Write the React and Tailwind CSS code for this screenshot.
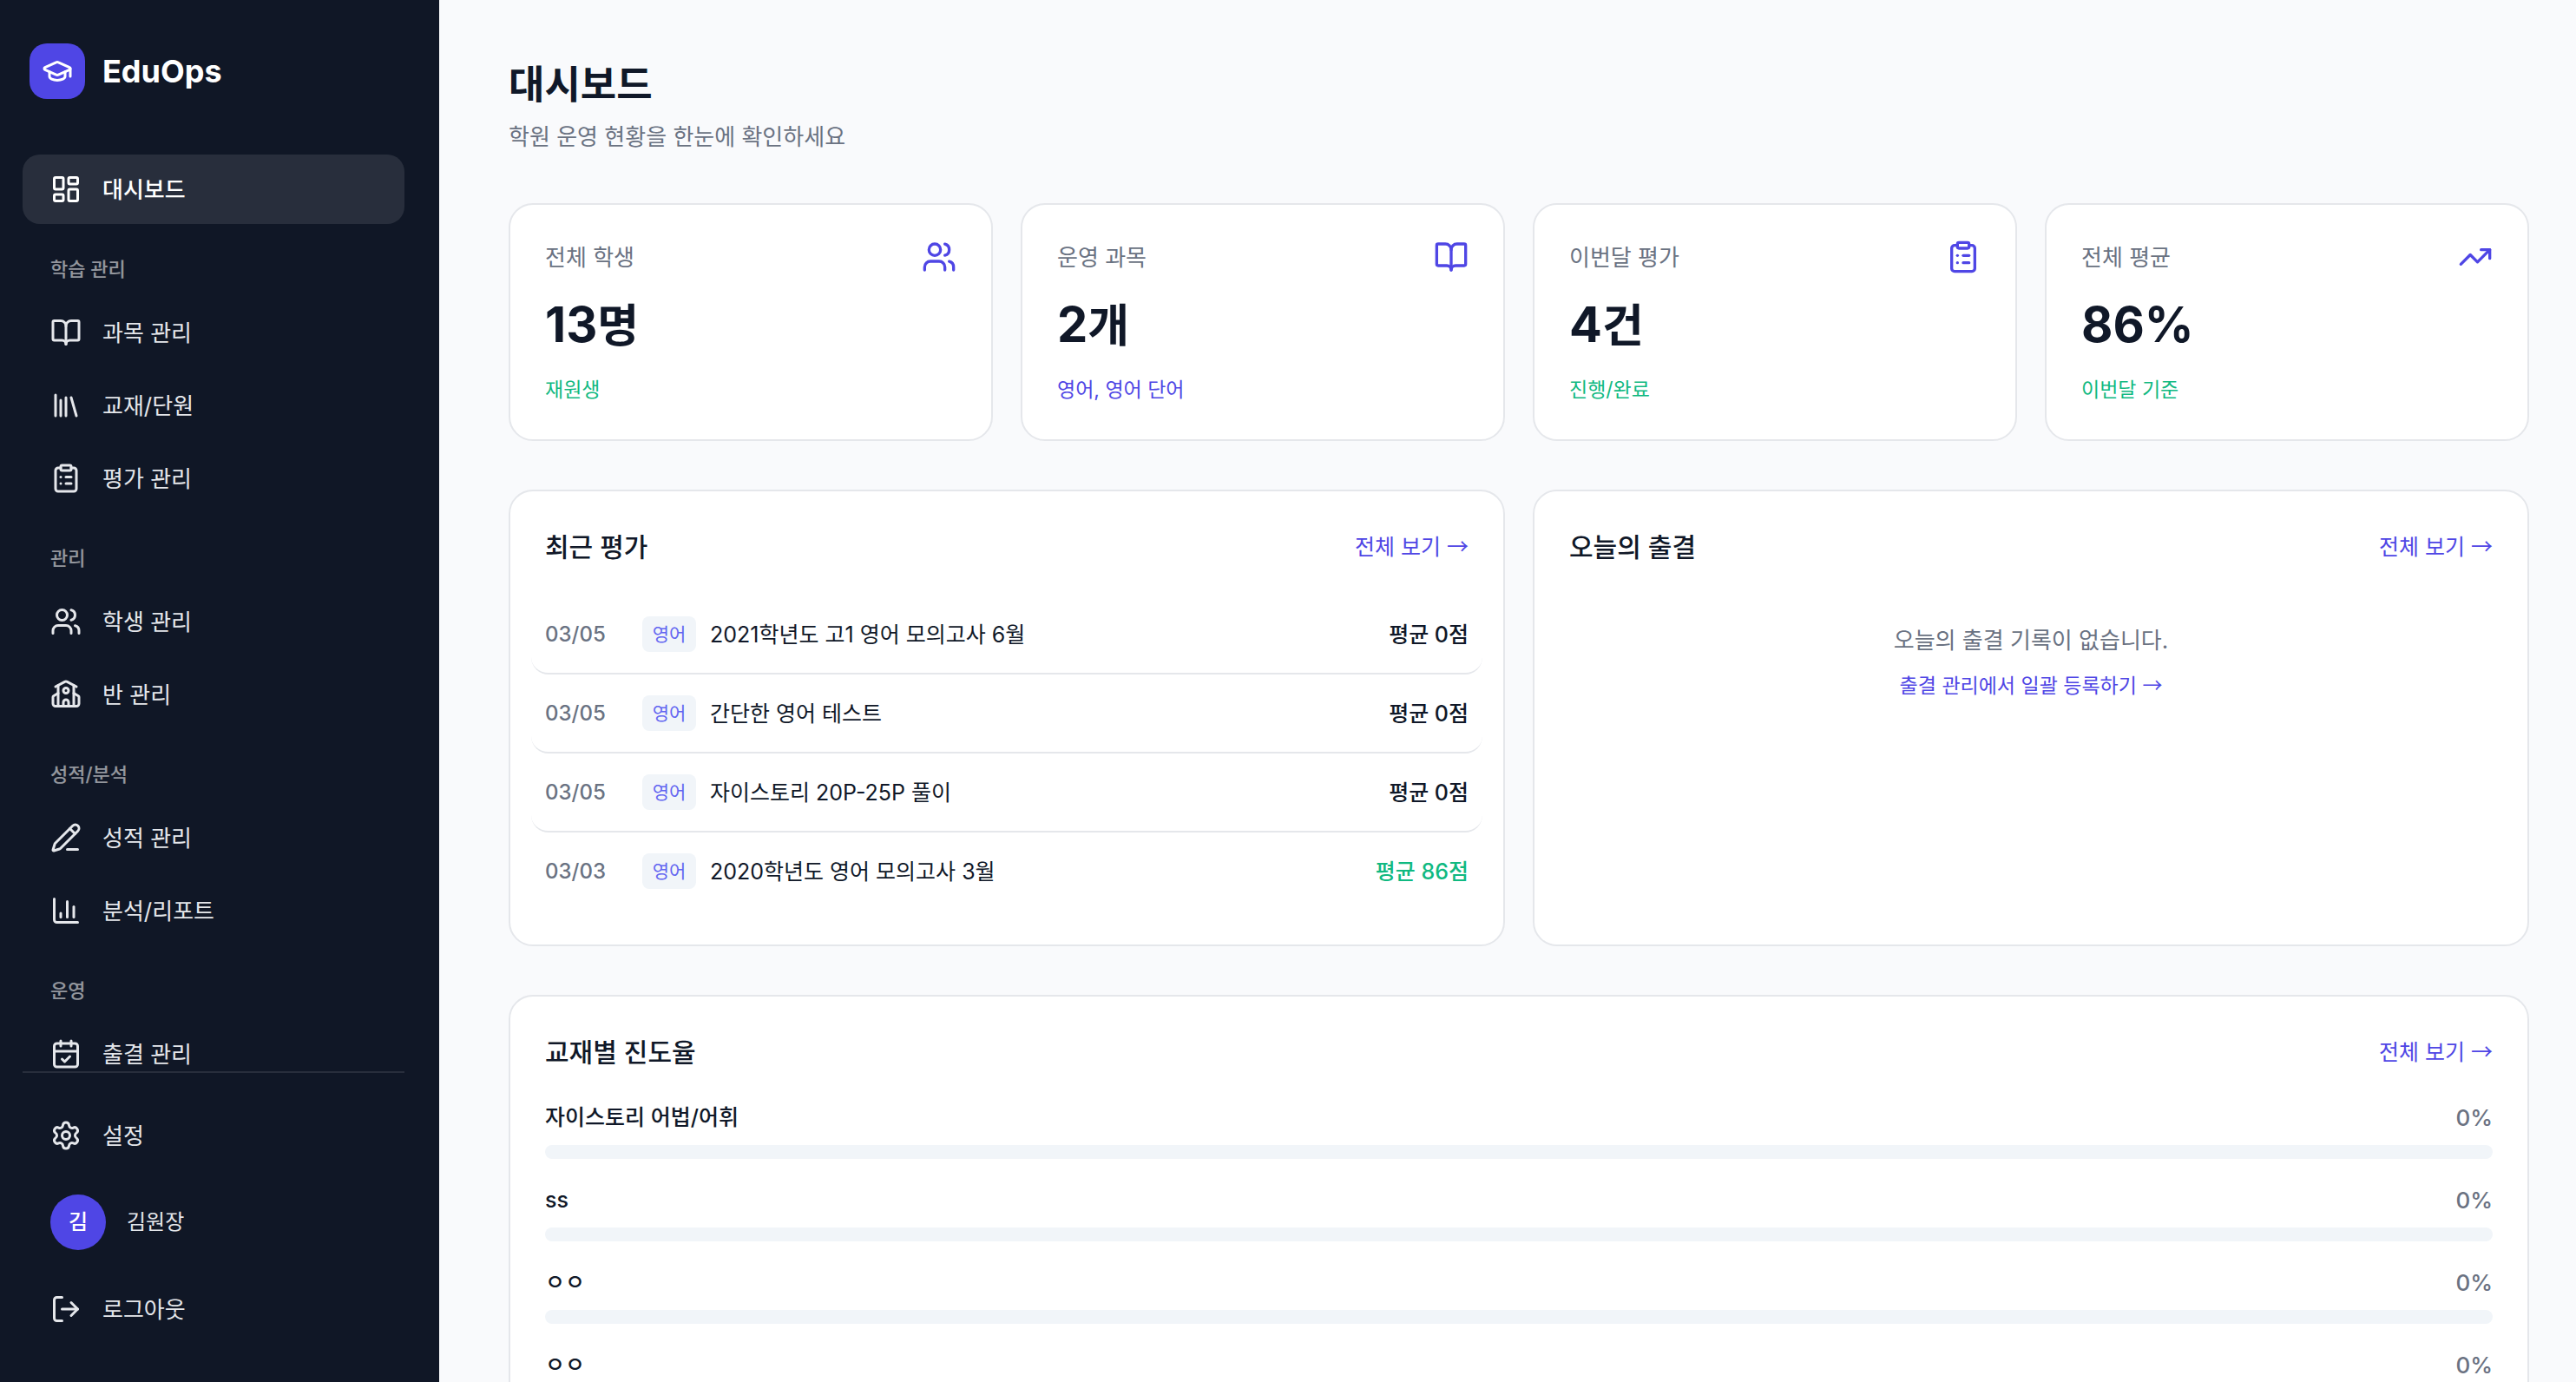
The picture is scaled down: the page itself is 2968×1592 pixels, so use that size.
import React from "react";
import {
  BookOpen,
  CalendarCheck,
  ChartColumn,
  ClipboardList,
  GraduationCap,
  LayoutDashboard,
  Library,
  LogOut,
  PencilLine,
  School,
  Settings,
  TrendingUp,
  Users,
} from "lucide-react";

const NAV_GROUPS = [
  {
    title: "학습 관리",
    items: [
      { label: "과목 관리", icon: BookOpen },
      { label: "교재/단원", icon: Library },
      { label: "평가 관리", icon: ClipboardList },
    ],
  },
  {
    title: "관리",
    items: [
      { label: "학생 관리", icon: Users },
      { label: "반 관리", icon: School },
    ],
  },
  {
    title: "성적/분석",
    items: [
      { label: "성적 관리", icon: PencilLine },
      { label: "분석/리포트", icon: ChartColumn },
    ],
  },
  {
    title: "운영",
    items: [{ label: "출결 관리", icon: CalendarCheck }],
  },
];

const STATS = [
  { label: "전체 학생", value: "13", unit: "명", note: "재원생", tone: "text-[#10b981]", icon: Users },
  { label: "운영 과목", value: "2", unit: "개", note: "영어, 영어 단어", tone: "text-[#4f46e5]", icon: BookOpen },
  { label: "이번달 평가", value: "4", unit: "건", note: "진행/완료", tone: "text-[#10b981]", icon: ClipboardList },
  { label: "전체 평균", value: "86%", unit: "", note: "이번달 기준", tone: "text-[#10b981]", icon: TrendingUp },
];

const EXAMS = [
  { date: "03/05", subject: "영어", title: "2021학년도 고1 영어 모의고사 6월", score: "평균 0점", tone: "text-gray-900" },
  { date: "03/05", subject: "영어", title: "간단한 영어 테스트", score: "평균 0점", tone: "text-gray-900" },
  { date: "03/05", subject: "영어", title: "자이스토리 20P-25P 풀이", score: "평균 0점", tone: "text-gray-900" },
  { date: "03/03", subject: "영어", title: "2020학년도 영어 모의고사 3월", score: "평균 86점", tone: "text-[#10b981]" },
];

const PROGRESS = [
  { name: "자이스토리 어법/어휘", percent: 0 },
  { name: "ss", percent: 0 },
  { name: "ㅇㅇ", percent: 0 },
  { name: "ㅇㅇ", percent: 0 },
];

function Arrow() {
  return <span className="font-['Noto_Sans_CJK_KR',sans-serif] font-normal">→</span>;
}

function NavItem({ label, icon: Icon, active = false }) {
  return (
    <a
      href="#"
      aria-current={active ? "page" : undefined}
      className={
        active
          ? "flex h-20 shrink-0 items-center gap-6 rounded-[20px] bg-white/10 px-8 text-[26px] font-medium text-white"
          : "flex h-20 shrink-0 items-center gap-6 rounded-[20px] px-8 text-[26px] text-gray-200"
      }
    >
      <Icon size={36} />
      <span>{label}</span>
    </a>
  );
}

function Sidebar() {
  return (
    <aside className="flex w-[506px] shrink-0 flex-col bg-[#101726] pt-[50px] pr-10 pb-11 pl-[26px]">
      <div className="flex items-center gap-5 px-2">
        <div className="flex size-16 items-center justify-center rounded-[20px] bg-[#4f46e5] text-white">
          <GraduationCap size={36} />
        </div>
        <span className="text-4xl font-bold text-white">EduOps</span>
      </div>

      <nav className="mt-16 flex min-h-0 flex-1 flex-col gap-1 overflow-hidden">
        <NavItem label="대시보드" icon={LayoutDashboard} active />
        {NAV_GROUPS.map((group) => (
          <React.Fragment key={group.title}>
            <h2 className="shrink-0 px-8 pt-8 pb-3 text-[22px] leading-[33px] font-medium text-white/55">
              {group.title}
            </h2>
            {group.items.map((item) => (
              <NavItem key={item.label} {...item} />
            ))}
          </React.Fragment>
        ))}
      </nav>

      <div className="flex flex-col gap-1 border-t-2 border-white/10 pt-8">
        <NavItem label="설정" icon={Settings} />
        <div className="flex items-center gap-6 px-8 py-6">
          <div className="flex size-16 items-center justify-center rounded-full bg-[#4f46e5] text-2xl font-medium text-white">
            김
          </div>
          <span className="text-2xl text-gray-200">김원장</span>
        </div>
        <button type="button" className="flex h-20 items-center gap-6 rounded-[20px] px-8 text-[26px] text-gray-200">
          <LogOut size={36} />
          <span>로그아웃</span>
        </button>
      </div>
    </aside>
  );
}

function StatCard({ label, value, unit, note, tone, icon: Icon }) {
  return (
    <section className="rounded-[28px] border-2 border-gray-200 bg-white p-10">
      <div className="flex h-10 items-center justify-between">
        <h2 className="text-[26px] text-gray-500">{label}</h2>
        <Icon size={40} className="text-[#4f46e5]" />
      </div>
      <p className="my-4 text-[56px] leading-[84px] font-bold text-gray-900">
        {value}
        {unit && <span className="text-[52px] leading-none">{unit}</span>}
      </p>
      <p className={`text-[23px] leading-[34px] ${tone}`}>{note}</p>
    </section>
  );
}

function Panel({ title, children }) {
  return (
    <section className="rounded-[28px] border-2 border-gray-200 bg-white p-10">
      <header className="mb-8 flex h-12 items-center justify-between">
        <h2 className="text-[30px] font-medium text-gray-900">{title}</h2>
        <a href="#" className="text-[25px] text-[#4f46e5]">
          전체 보기 <Arrow />
        </a>
      </header>
      {children}
    </section>
  );
}

function ExamRow({ date, subject, title, score, tone }) {
  return (
    <li className="-mx-4 flex items-center gap-4 rounded-[20px] border-b-2 border-gray-200 px-4 py-6 last:border-b-0">
      <span className="w-24 text-2xl font-medium text-gray-500">{date}</span>
      <span className="flex h-[41px] w-[62px] items-center justify-center rounded-lg bg-slate-100 text-[21px] text-[#6366f1]">
        {subject}
      </span>
      <span className="flex-1 text-[25px] leading-8 text-gray-900">{title}</span>
      <span className={`text-[25px] leading-8 font-medium ${tone}`}>{score}</span>
    </li>
  );
}

export default function App() {
  return (
    <div className="flex h-screen overflow-hidden bg-[#f9fafc] font-['Inter','Noto_Sans_CJK_KR',sans-serif]">
      <Sidebar />
      <main className="flex min-w-0 flex-1 flex-col gap-14 overflow-hidden pt-[66px] pr-[54px] pl-20 *:shrink-0">
        <header>
          <h1 className="text-[45px] leading-[64px] font-bold text-gray-900">대시보드</h1>
          <p className="mt-2 text-[26px] leading-10 text-gray-500">학원 운영 현황을 한눈에 확인하세요</p>
        </header>

        <div className="grid grid-cols-4 gap-8">
          {STATS.map((stat) => (
            <StatCard key={stat.label} {...stat} />
          ))}
        </div>

        <div className="grid grid-cols-2 gap-8">
          <Panel title="최근 평가">
            <ul>
              {EXAMS.map((exam) => (
                <ExamRow key={exam.title} {...exam} />
              ))}
            </ul>
          </Panel>
          <Panel title="오늘의 출결">
            <div className="flex flex-col items-center gap-3.5 py-8">
              <p className="text-[26px] leading-[39px] text-gray-500">오늘의 출결 기록이 없습니다.</p>
              <a href="#" className="text-[23px] leading-[34px] text-[#4f46e5]">
                출결 관리에서 일괄 등록하기 <Arrow />
              </a>
            </div>
          </Panel>
        </div>

        <Panel title="교재별 진도율">
          <ul className="flex flex-col gap-7">
            {PROGRESS.map(({ name, percent }, index) => (
              <li key={index} className="flex flex-col gap-3">
                <div className="flex h-[39px] items-center justify-between">
                  <span className="text-[25px] font-medium text-gray-900">{name}</span>
                  <span className="text-[26px] font-medium text-gray-500">{percent}%</span>
                </div>
                <div className="h-4 overflow-hidden rounded-full bg-slate-100">
                  <div className="h-full rounded-full bg-[#4f46e5]" style={{ width: `${percent}%` }} />
                </div>
              </li>
            ))}
          </ul>
        </Panel>
      </main>
    </div>
  );
}
